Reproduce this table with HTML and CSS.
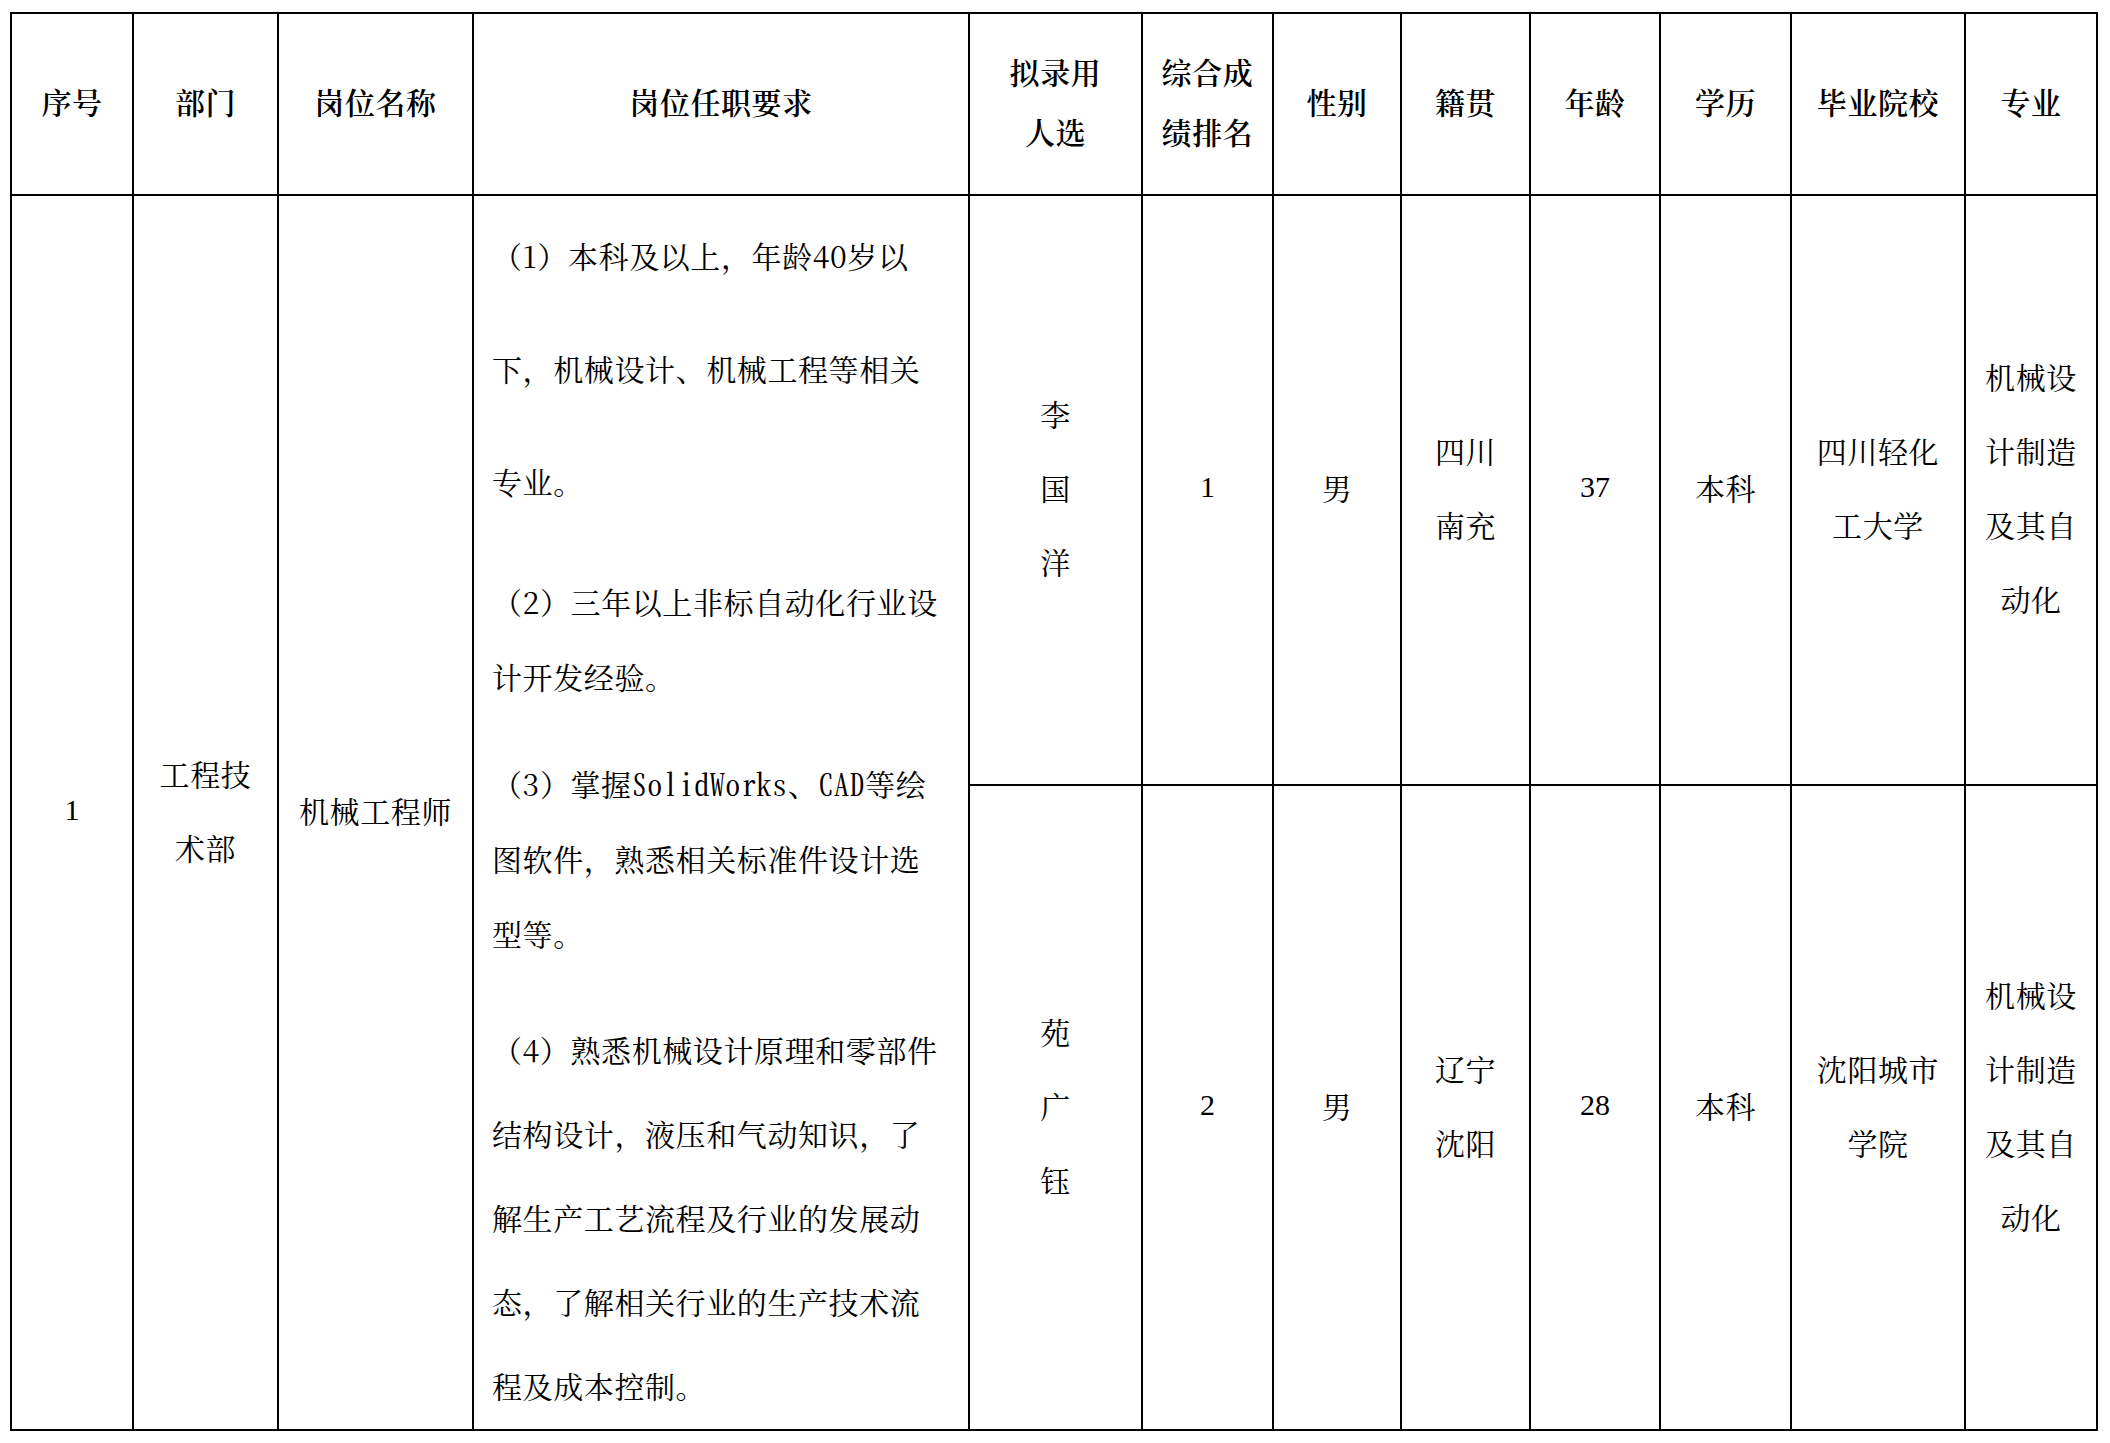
FILE: index.html
```html
<!DOCTYPE html>
<html lang="zh-CN">
<head>
<meta charset="utf-8">
<title>拟录用人选公示</title>
<link rel="stylesheet" href="styles.css">
</head>
<body>
<div class="sheet">
<table class="roster">
  <colgroup>
    <col class="c-no"><col class="c-dept"><col class="c-post"><col class="c-req"><col class="c-name"><col class="c-rank"><col class="c-sex"><col class="c-home"><col class="c-age"><col class="c-edu"><col class="c-school"><col class="c-major">
  </colgroup>
  <thead>
    <tr class="head">
      <th>序号</th>
      <th>部门</th>
      <th>岗位名称</th>
      <th>岗位任职要求</th>
      <th>拟录用<br>人选</th>
      <th>综合成绩排名</th>
      <th>性别</th>
      <th>籍贯</th>
      <th>年龄</th>
      <th>学历</th>
      <th>毕业院校</th>
      <th>专业</th>
    </tr>
  </thead>
  <tbody>
    <tr class="r1">
      <td rowspan="2" class="num">1</td>
      <td rowspan="2">工程技术部</td>
      <td rowspan="2">机械工程师</td>
      <td rowspan="2" class="req">
        <p class="p1">（1）本科及以上，年龄40岁以下，机械设计、机械工程等相关专业。</p>
        <p class="p2">（2）三年以上非标自动化行业设计开发经验。</p>
        <p class="p3">（3）掌握<span class="hw">SolidWorks</span>、<span class="hw">CAD</span>等绘图软件，熟悉相关标准件设计选型等。</p>
        <p class="p4">（4）熟悉机械设计原理和零部件结构设计，液压和气动知识，了解生产工艺流程及行业的发展动态，了解相关行业的生产技术流程及成本控制。</p>
      </td>
      <td>李<br>国<br>洋</td>
      <td class="num">1</td>
      <td>男</td>
      <td>四川<br>南充</td>
      <td class="num">37</td>
      <td>本科</td>
      <td>四川轻化工大学</td>
      <td>机械设计制造及其自动化</td>
    </tr>
    <tr class="r2">
      <td>苑<br>广<br>钰</td>
      <td class="num">2</td>
      <td>男</td>
      <td>辽宁<br>沈阳</td>
      <td class="num">28</td>
      <td>本科</td>
      <td>沈阳城市学院</td>
      <td>机械设计制造及其自动化</td>
    </tr>
  </tbody>
</table>
</div>
</body>
</html>
```

FILE: styles.css
```css
html, body {
  margin: 0;
  padding: 0;
  background: #ffffff;
}

.sheet {
  padding: 12px 0 0 10px;
}

.roster {
  border-collapse: collapse;
  table-layout: fixed;
  width: 2086px;
  color: #000000;
  font-family: "Noto Serif CJK SC", "Noto Sans CJK SC", serif;
  font-size: 30px;
  letter-spacing: 0.6px;
}

.c-no { width: 122px; }
.c-dept { width: 145px; }
.c-post { width: 195px; }
.c-req { width: 496px; }
.c-name { width: 173px; }
.c-rank { width: 131px; }
.c-sex { width: 128px; }
.c-home { width: 129px; }
.c-age { width: 130px; }
.c-edu { width: 131px; }
.c-school { width: 174px; }
.c-major { width: 132px; }

.roster th,
.roster td {
  border: 2px solid #000000;
  padding: 0 18px 6px;
  text-align: center;
  vertical-align: middle;
}

.roster th {
  font-weight: 600;
  line-height: 60px;
}

.roster td {
  font-weight: 400;
  line-height: 74px;
}

.head { height: 182px; }
.r1 { height: 590px; }
.r2 { height: 645px; }

.roster td.num {
  font-family: "Liberation Serif", "Times New Roman", serif;
  letter-spacing: 0;
}

.roster td.req {
  text-align: left;
  vertical-align: top;
  padding: 3px 22px 0 18px;
}

.req p {
  margin: 0;
}

.req .p1 { line-height: 113px; }
.req .p2 { line-height: 75px; margin-top: 26px; }
.req .p3 { line-height: 75px; margin-top: 32px; }
.req .p4 { line-height: 84px; margin-top: 36px; }

.hw {
  font-feature-settings: "hwid" 1;
}
```
